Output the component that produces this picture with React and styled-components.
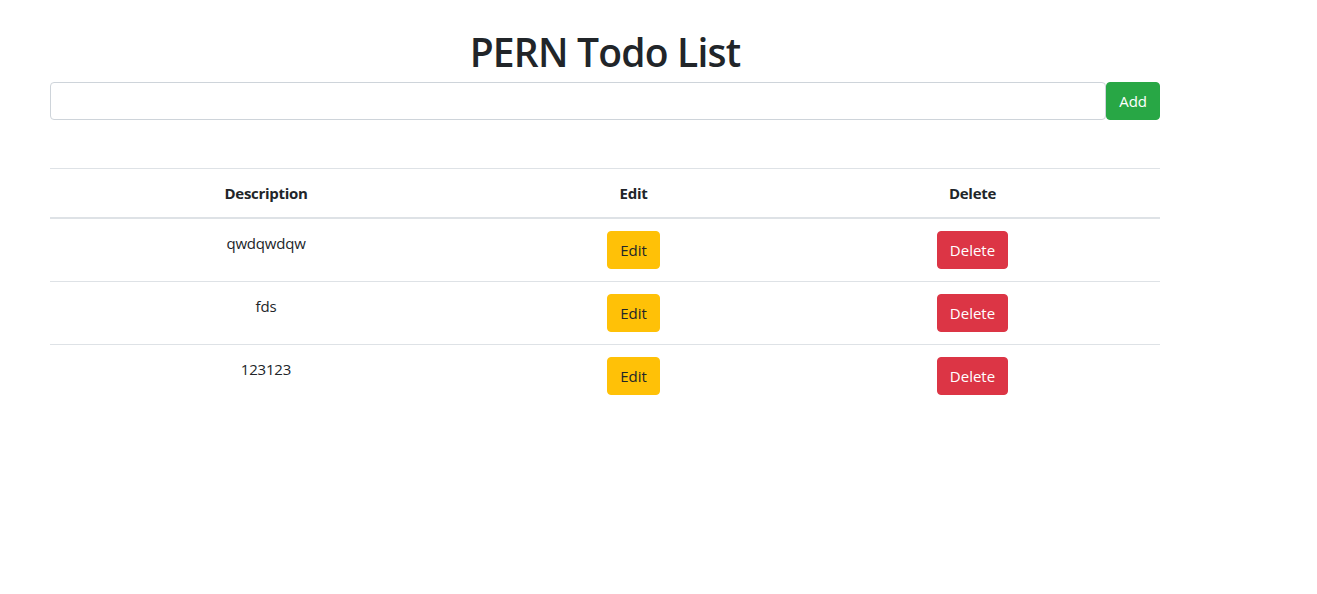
import React from "react";
import styled, { createGlobalStyle } from "styled-components";

const Global = createGlobalStyle`
  * { box-sizing: border-box; }
  body {
    margin: 0;
    font-family: "Open Sans", "Noto Sans", "Liberation Sans", sans-serif;
    font-size: 16px;
    line-height: 24px;
    color: #212529;
    background: #fff;
  }
`;

const Container = styled.div`
  width: 1140px;
  padding: 0 15px;
  margin-left: 35px;
`;

const Title = styled.h1`
  margin: 28px 0 6px;
  text-align: center;
  font-size: 39px;
  font-weight: 600;
  line-height: 48px;
  letter-spacing: -0.8px;
`;

const Form = styled.form`
  display: flex;
`;

const Input = styled.input`
  flex: 1;
  height: 38px;
  padding: 6px 12px;
  border: 1px solid #ced4da;
  border-radius: 4px;
  font: inherit;
  outline: none;
`;

const Button = styled.button`
  display: inline-block;
  height: 38px;
  padding: 0 12px;
  border: 1px solid ${(p) => p.$bg};
  border-radius: 4px;
  background: ${(p) => p.$bg};
  color: ${(p) => p.$fg};
  font-family: inherit;
  font-size: 15px;
  line-height: 36px;
  cursor: pointer;
`;

const Table = styled.table`
  width: 100%;
  margin-top: 48px;
  border-collapse: collapse;
  text-align: center;
`;

const Th = styled.th`
  padding: 12px;
  border-top: 1px solid #dee2e6;
  border-bottom: 2px solid #dee2e6;
  font-size: 15px;
  line-height: 24px;
  font-weight: 700;
  letter-spacing: -0.3px;
  width: ${(p) => p.$w}px;
`;

const Td = styled.td`
  padding: 12px;
  border-top: 1px solid #dee2e6;
  vertical-align: top;
  font-size: 15px;
  line-height: 24px;
  letter-spacing: -0.2px;
`;

const todos = ["qwdqwdqw", "fds", "123123"];

export default function App() {
  return (
    <>
      <Global />
      <Container>
        <Title>PERN Todo List</Title>
        <Form onSubmit={(e) => e.preventDefault()}>
          <Input type="text" />
          <Button $bg="#28a745" $fg="#fff">Add</Button>
        </Form>
        <Table>
          <thead>
            <tr>
              <Th $w={432}>Description</Th>
              <Th $w={303}>Edit</Th>
              <Th $w={375}>Delete</Th>
            </tr>
          </thead>
          <tbody>
            {todos.map((t) => (
              <tr key={t}>
                <Td>{t}</Td>
                <Td>
                  <Button $bg="#ffc107" $fg="#212529">Edit</Button>
                </Td>
                <Td>
                  <Button $bg="#dc3545" $fg="#fff">Delete</Button>
                </Td>
              </tr>
            ))}
          </tbody>
        </Table>
      </Container>
    </>
  );
}
